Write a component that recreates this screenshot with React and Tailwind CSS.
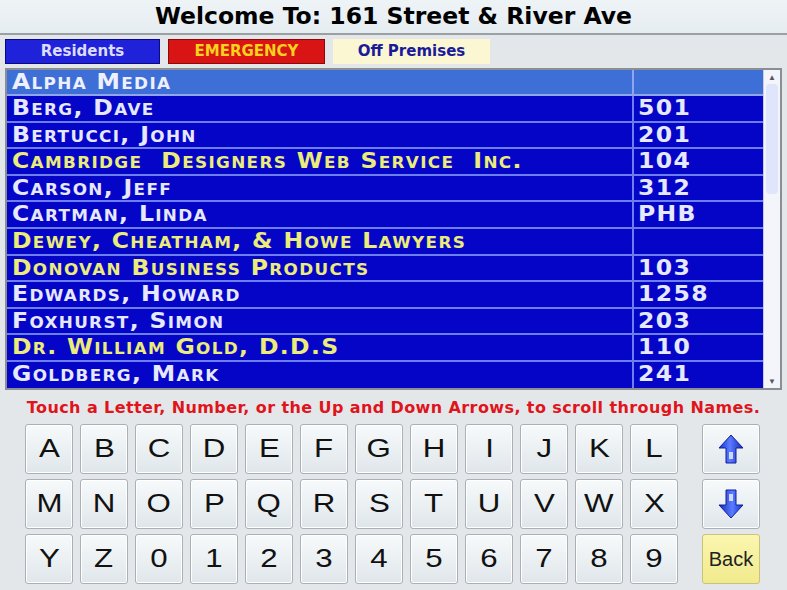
import React from "react";

const rows = [
  { name: "Berg, Dave", unit: "501", biz: false },
  { name: "Bertucci, John", unit: "201", biz: false },
  { name: "Cambridge  Designers Web Service  Inc.", unit: "104", biz: true },
  { name: "Carson, Jeff", unit: "312", biz: false },
  { name: "Cartman, Linda", unit: "PHB", biz: false },
  { name: "Dewey, Cheatham, & Howe Lawyers", unit: "", biz: true },
  { name: "Donovan Business Products", unit: "103", biz: true },
  { name: "Edwards, Howard", unit: "1258", biz: false },
  { name: "Foxhurst, Simon", unit: "203", biz: false },
  { name: "Dr. William Gold, D.D.S", unit: "110", biz: true },
  { name: "Goldberg, Mark", unit: "241", biz: false },
];

const keyRows = [
  ["A", "B", "C", "D", "E", "F", "G", "H", "I", "J", "K", "L"],
  ["M", "N", "O", "P", "Q", "R", "S", "T", "U", "V", "W", "X"],
  ["Y", "Z", "0", "1", "2", "3", "4", "5", "6", "7", "8", "9"],
];

const nameFont = { fontFamily: '"DejaVu Sans", sans-serif', fontVariant: "small-caps" };

function Arrow({ down }) {
  const id = down ? "gd" : "gu";
  return (
    <svg width="26" height="30" viewBox="0 0 26 30" className={down ? "rotate-180" : ""}>
      <defs>
        <linearGradient id={id} x1="0" y1="0" x2="1" y2="0">
          <stop offset="0" stopColor="#1030d8" />
          <stop offset="0.45" stopColor="#5c7dff" />
          <stop offset="1" stopColor="#1428b8" />
        </linearGradient>
      </defs>
      <path d="M13 1 L25 14 L18 14 L18 29 L8 29 L8 14 L1 14 Z" fill={`url(#${id})`} stroke="#10209a" strokeWidth="1" />
      <rect x="11" y="18" width="4" height="7" fill="#e4eaff" opacity="0.85" />
    </svg>
  );
}

function Key({ children, className = "" }) {
  return (
    <div
      className={`h-[50px] flex items-center justify-center rounded-[3px] border border-[#a9b1b6] bg-gradient-to-b from-[#f7fafb] to-[#dfe6ea] text-[#111] shadow-[inset_0_0_0_1px_#fff] ${className}`}
    >
      {children}
    </div>
  );
}

function Cell({ children, className = "" }) {
  return (
    <div className={`text-[21px] font-bold leading-[25px] tracking-[1.2px] whitespace-pre ${className}`} style={nameFont}>
      <span className="inline-block origin-left scale-x-[1.12]">{children}</span>
    </div>
  );
}

export default function App() {
  return (
    <div className="w-[787px] h-[590px] bg-[#e4e7e9] overflow-hidden flex flex-col">
      <div className="h-[35px] bg-gradient-to-b from-[#eef3f6] to-[#e6edf1] border-b-2 border-[#9aa0a4] flex items-center justify-center">
        <h1 className="text-[23.5px] font-bold text-black" style={{ fontFamily: '"DejaVu Sans", sans-serif' }}>
          Welcome To: 161 Street &amp; River Ave
        </h1>
      </div>

      <div className="flex gap-2 px-[5px] mt-[4px] h-[25px]" style={{ fontFamily: '"DejaVu Sans", sans-serif' }}>
        <div className="w-[155px] bg-[#1f22d8] border border-[#0a0a80] flex items-center justify-center text-[15px] font-bold text-[#dcdcff]">
          Residents
        </div>
        <div className="w-[157px] bg-[#d81414] border border-[#8a0a0a] flex items-center justify-center text-[15px] font-bold text-[#f8d21c]">
          EMERGENCY
        </div>
        <div className="w-[157px] bg-[#fbf7d2] flex items-center justify-center text-[15px] font-bold text-[#1a1a9a]">
          Off Premises
        </div>
      </div>

      <div className="mx-[5px] mt-[4px] h-[322px] border-2 border-[#8a8f93] flex bg-[#1010c8]">
        <div className="flex-1 flex flex-col">
          <div className="h-[26px] bg-[#3d6fd6] flex border-b-2 border-[#8fa6ee]">
            <Cell className="flex-1 pl-[5px] text-[#eef0ff]">Alpha Media</Cell>
            <div className="w-[131px] border-l-2 border-[#8fa6ee]"></div>
          </div>
          {rows.map((r, i) => (
            <div key={i} className={`h-[26.6px] flex bg-[#0505c8] ${i < rows.length - 1 ? "border-b-2 border-[#6d7fee]" : ""}`}>
              <Cell className={`flex-1 pl-[5px] ${r.biz ? "text-[#ecec7a]" : "text-[#e6e8ff]"}`}>{r.name}</Cell>
              <Cell className="w-[131px] border-l-2 border-[#6d7fee] pl-[4px] text-[#e6e8ff]">{r.unit}</Cell>
            </div>
          ))}
        </div>
        <div className="w-[17px] bg-[#f3f5fb] border-l border-[#c8cce0] flex flex-col">
          <div className="h-[14px] flex items-center justify-center text-[8px] text-[#556]">▲</div>
          <div className="h-[110px] bg-[#dfe5fb] mx-[2px] rounded-sm"></div>
          <div className="flex-1"></div>
          <div className="h-[14px] flex items-center justify-center text-[8px] text-[#556]">▼</div>
        </div>
      </div>

      <div
        className="text-center text-[16px] tracking-[0.4px] font-bold text-[#e0141c] mt-[8px] leading-[19px] whitespace-nowrap"
        style={{ fontFamily: '"DejaVu Sans", sans-serif' }}
      >
        Touch a Letter, Number, or the Up and Down Arrows, to scroll through Names.
      </div>

      <div className="flex mt-[7px] pl-[25px]">
        <div className="flex flex-col gap-[5px]">
          {keyRows.map((row, ri) => (
            <div key={ri} className="flex gap-[7px]">
              {row.map((k) => (
                <Key key={k} className="w-[48px] text-[25px]">
                  <span style={{ fontFamily: '"Liberation Sans", sans-serif' }} className="scale-x-125 inline-block">
                    {k}
                  </span>
                </Key>
              ))}
            </div>
          ))}
        </div>
        <div className="flex flex-col gap-[5px] ml-[24px]">
          <Key className="w-[58px]">
            <Arrow />
          </Key>
          <Key className="w-[58px]">
            <Arrow down />
          </Key>
          <div className="w-[58px] h-[50px] flex items-center justify-center rounded-[3px] border border-[#c9c27a] bg-gradient-to-b from-[#fbf6b0] to-[#f1ea8c] text-[20px] text-[#222]" style={{ fontFamily: '"Liberation Sans", sans-serif' }}>
            Back
          </div>
        </div>
      </div>
    </div>
  );
}
